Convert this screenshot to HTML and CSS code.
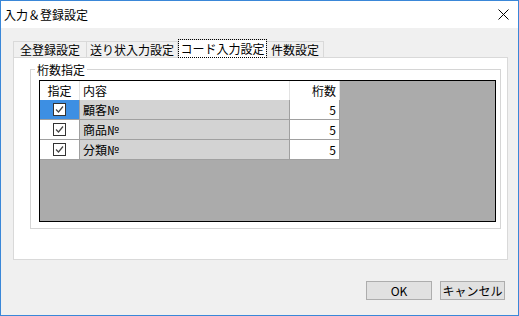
FILE: index.html
```html
<!DOCTYPE html>
<html lang="ja">
<head>
  <meta charset="UTF-8">
  <title>入力＆登録設定</title>
  <link rel="stylesheet" href="styles.css">
</head>
<body>

<div class="window">
  <div class="titlebar">
    <span class="title">入力＆登録設定</span>
    <svg class="close" width="11" height="11" viewBox="0 0 11 11">
      <path d="M0.5 0.5 L10.5 10.5 M10.5 0.5 L0.5 10.5" stroke="#000" stroke-width="1" fill="none"/>
    </svg>
  </div>

  <div class="client">
    <div class="tabs">
      <div class="tab t1">全登録設定</div>
      <div class="tab t2">送り状入力設定</div>
      <div class="tab t3 active"><span class="focus">コード入力設定</span></div>
      <div class="tab t4">件数設定</div>
    </div>

    <div class="panel">
      <div class="group">
        <div class="group-label">桁数指定</div>
        <div class="grid">
          <div class="row head">
            <div class="cell c-check center">指定</div>
            <div class="cell c-name">内容</div>
            <div class="cell c-num right">桁数</div>
          </div>
          <div class="row">
            <div class="cell c-check center selected">
              <svg width="13" height="13" viewBox="0 0 13 13"><rect x="0.5" y="0.5" width="12" height="12" fill="#fff" stroke="#333"/><path d="M3 6.5 L5.5 9 L10 3.5" stroke="#444" stroke-width="1.2" fill="none"/></svg>
            </div>
            <div class="cell c-name gray">顧客№</div>
            <div class="cell c-num right">5</div>
          </div>
          <div class="row">
            <div class="cell c-check center">
              <svg width="13" height="13" viewBox="0 0 13 13"><rect x="0.5" y="0.5" width="12" height="12" fill="#fff" stroke="#333"/><path d="M3 6.5 L5.5 9 L10 3.5" stroke="#444" stroke-width="1.2" fill="none"/></svg>
            </div>
            <div class="cell c-name gray">商品№</div>
            <div class="cell c-num right">5</div>
          </div>
          <div class="row">
            <div class="cell c-check center">
              <svg width="13" height="13" viewBox="0 0 13 13"><rect x="0.5" y="0.5" width="12" height="12" fill="#fff" stroke="#333"/><path d="M3 6.5 L5.5 9 L10 3.5" stroke="#444" stroke-width="1.2" fill="none"/></svg>
            </div>
            <div class="cell c-name gray">分類№</div>
            <div class="cell c-num right">5</div>
          </div>
        </div>
      </div>
    </div>

    <div class="buttons">
      <button class="btn ok">OK</button>
      <button class="btn cancel">キャンセル</button>
    </div>
  </div>
</div>

</body>
</html>
```

FILE: styles.css
```css
* {
  box-sizing: border-box;
}

body {
  margin: 0;
  font-family: "Noto Sans CJK JP", "Noto Sans", sans-serif;
  font-size: 12px;
  color: #000;
  background: #fff;
}

.window {
  width: 519px;
  height: 316px;
  border: 1px solid #3a87d8;
  background: #f0f0f0;
  display: flex;
  flex-direction: column;
}

.titlebar {
  height: 27px;
  background: #fff;
  display: flex;
  align-items: center;
  justify-content: space-between;
  padding: 0 9px 0 3px;
}

.title {
  line-height: 14px;
}

.client {
  flex: 1;
  display: flex;
  flex-direction: column;
  padding: 11px 10px 0 12px;
}

.tabs {
  display: flex;
  align-items: flex-end;
  height: 18px;
}

.tab {
  height: 16px;
  border: 1px solid #d9d9d9;
  border-bottom: none;
  background: #f0f0f0;
  text-align: center;
  line-height: 15px;
}

.t1 { width: 74px; }
.t2 { width: 91px; border-left: none; }
.t3 { width: 89px; }
.t4 { width: 57px; border-left: none; }

.tab.active {
  height: 19px;
  background: #fff;
  margin-bottom: -1px;
  position: relative;
  z-index: 1;
  padding-top: 1px;
}

.focus {
  outline: 1px dotted #000;
  padding: 0 1px;
}

.panel {
  width: 495px;
  height: 203px;
  background: #fff;
  border: 1px solid #d9d9d9;
  padding: 11px 6px 0 16px;
}

.group {
  height: 160px;
  border: 1px solid #d5d5d5;
  padding: 0 3px 0 8px;
}

.group-label {
  margin-top: -8px;
  margin-left: -4px;
  padding: 0 2px;
  width: fit-content;
  height: 15px;
  line-height: 15px;
  background: #fff;
}

.grid {
  margin-top: 3px;
  width: 457px;
  height: 142px;
  border: 1px solid #000;
  background: #ababab;
}

.row {
  display: flex;
  height: 20px;
}

.row.head {
  height: 19px;
}

.cell {
  display: flex;
  align-items: center;
  height: 100%;
  background: #fff;
  border-right: 1px solid #a0a0a0;
  border-bottom: 1px solid #a0a0a0;
  line-height: 14px;
}

.head .cell {
  border-right-color: #e3e3e3;
  border-bottom: none;
}

.c-check { width: 40px; }
.c-name { width: 210px; padding-left: 3px; }
.c-num { width: 50px; padding-right: 3px; }

.center { justify-content: center; }
.right { justify-content: flex-end; }

.gray {
  background: #d3d3d3;
}

.selected {
  background: #3d8fe3;
}

.buttons {
  display: flex;
  justify-content: flex-end;
  gap: 8px;
  margin-top: 21px;
  padding-right: 3px;
}

.btn {
  height: 19px;
  padding: 0;
  border: 1px solid #adadad;
  background: #e1e1e1;
  font: inherit;
  line-height: 14px;
  color: #000;
}

.ok { width: 66px; }
.cancel { width: 65px; }
```
